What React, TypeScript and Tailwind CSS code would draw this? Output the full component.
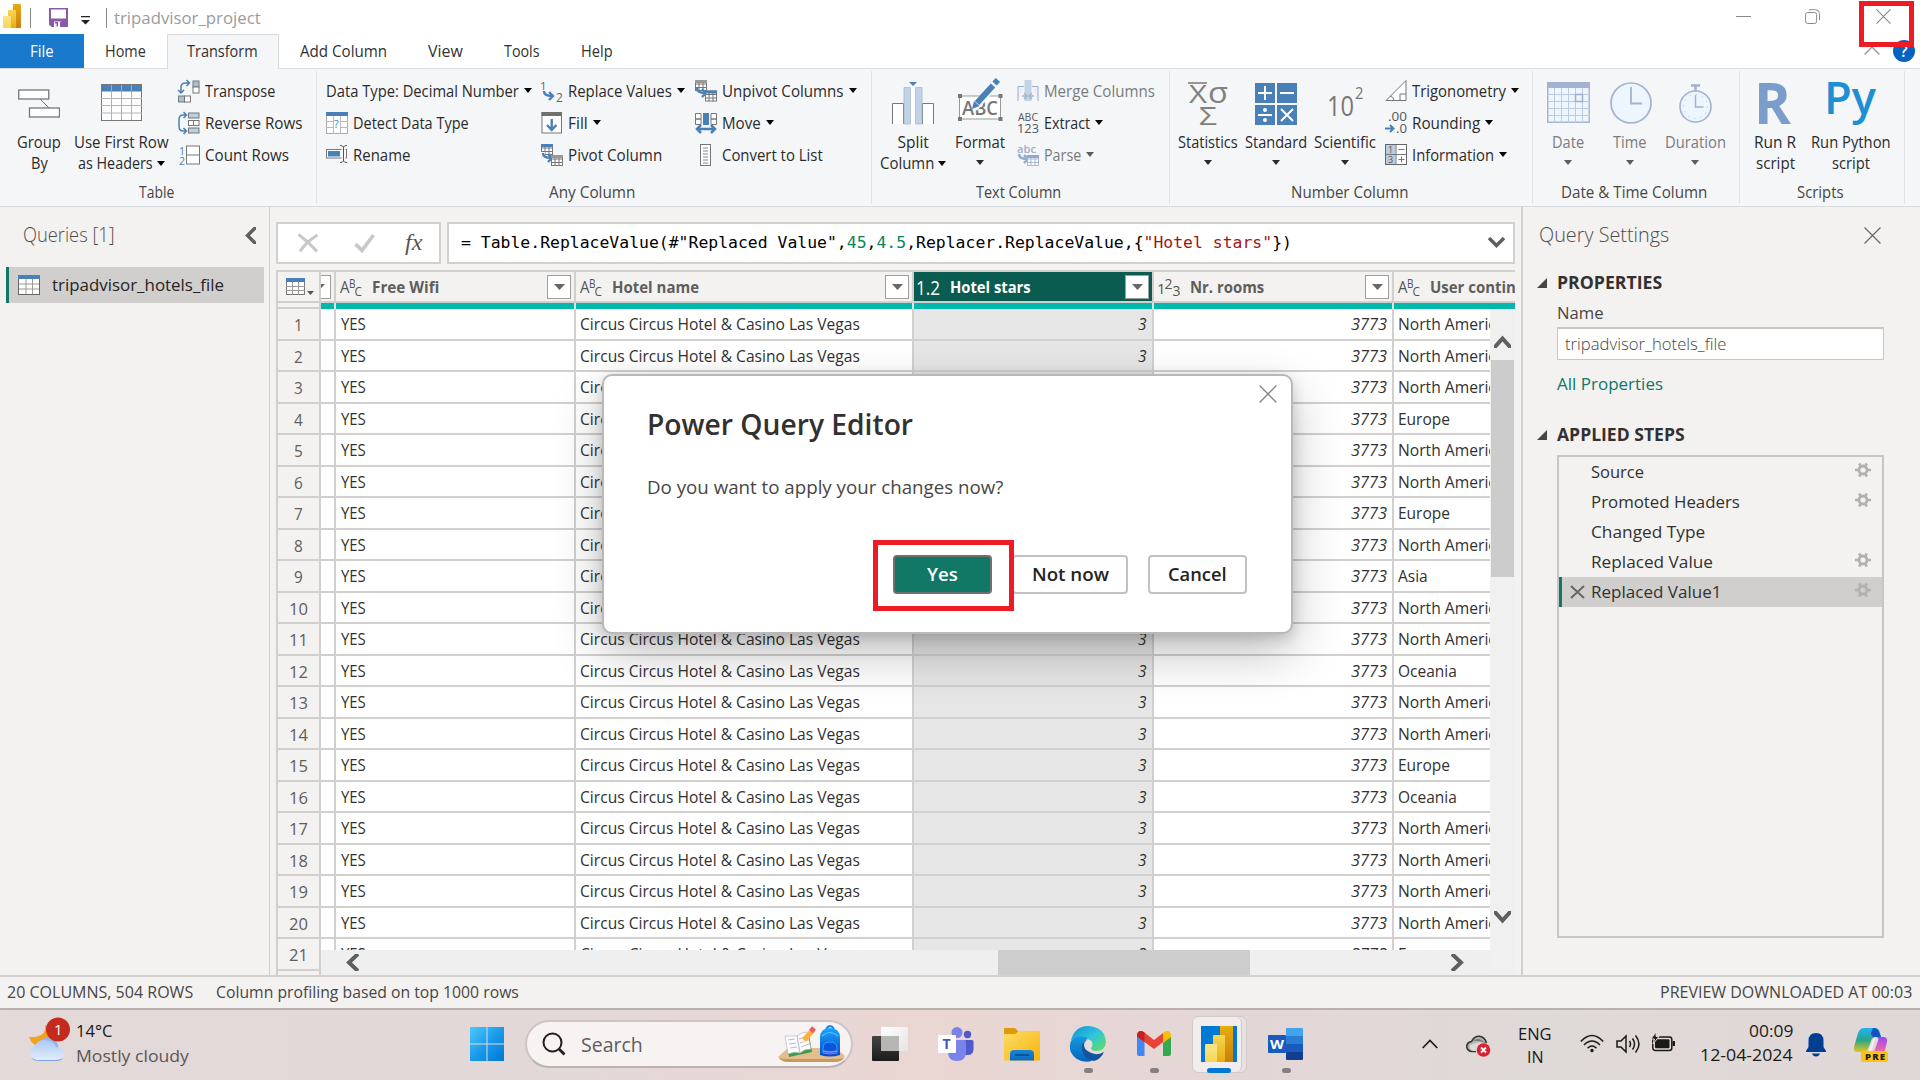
import { useLayoutEffect, useRef, type ReactNode } from "react";

/** Single line of text condensed or stretched to an exact width. */
function T({ w, c = "", children }: { w: number; c?: string; children: ReactNode }) {
  const ref = useRef<HTMLSpanElement>(null);
  useLayoutEffect(() => {
    const el = ref.current;
    if (!el) return;
    const natural = el.offsetWidth;
    if (natural > 0) el.style.transform = `scaleX(${w / natural})`;
  }, [w]);
  return (
    <span className={`block shrink-0 whitespace-pre ${c}`} style={{ width: w }}>
      <span ref={ref} className="inline-block origin-left">
        {children}
      </span>
    </span>
  );
}

function Caret({ c = "text-black" }: { c?: string }) {
  return (
    <svg width="8" height="5" viewBox="0 0 8 5" className={`shrink-0 ${c}`}>
      <path d="M0 0h8L4 5z" fill="currentColor" />
    </svg>
  );
}

type P = { children: ReactNode };
const Ic = ({ children }: P) => (
  <svg width="22" height="22" viewBox="0 0 22 22" fill="none" className="shrink-0 overflow-visible">
    {children}
  </svg>
);

/* ---------- ribbon pieces ---------- */

function Group({ w, label, lw, children }: { w: string; label: string; lw: number; children: ReactNode }) {
  return (
    <div className={`flex shrink-0 ${w}`}>
      <div className="flex min-w-0 flex-1 flex-col items-center">
        <div className="flex h-[112px] w-full pt-[6px]">{children}</div>
        <T w={lw} c="mr-[4px] leading-[22px] text-[#484644]">
          {label}
        </T>
      </div>
      <div className="mt-[2px] h-[133px] w-px bg-[#e1e3e5]" />
    </div>
  );
}

type Line = [string, number, boolean?];
function Big({ c, icon, a, b, off }: { c: string; icon: ReactNode; a: Line; b?: Line; off?: boolean }) {
  const tone = off ? "text-[#7b7b7b]" : "text-[#2b2b2b]";
  return (
    <div className={`flex shrink-0 flex-col items-center ${c} ${tone}`}>
      <div className="flex h-[57px] items-center justify-center">{icon}</div>
      <T w={a[1]} c="leading-[21px]">
        {a[0]}
      </T>
      <div className="flex h-[21px] items-center gap-[4px]">
        {b ? (
          <>
            <T w={b[1]} c="leading-[21px]">
              {b[0]}
            </T>
            {b[2] && <Caret />}
          </>
        ) : (
          <Caret c={off ? "text-[#5c5c5c] -mt-[3px]" : "-mt-[3px]"} />
        )}
      </div>
    </div>
  );
}

function Row({ icon, t, w, caret, off }: { icon?: ReactNode; t: string; w: number; caret?: boolean; off?: boolean }) {
  return (
    <div className={`flex h-8 items-center gap-[5px] ${off ? "text-[#7b7b7b]" : "text-[#2b2b2b]"}`}>
      {icon && <Ic>{icon}</Ic>}
      <T w={w} c="pt-[2px]">
        {t}
      </T>
      {caret && <Caret c={off ? "-mt-[2px] text-[#5c5c5c]" : "-mt-[2px] text-black"} />}
    </div>
  );
}

const BLUE = "#4a80b8";
const GR = "#777";

const tinyTable = (x: number, y: number, head: string, k = GR) => (
  <g>
    <rect x={x + 0.5} y={y + 0.5} width="11" height="10" fill="#fff" stroke={k} />
    <path d={`M${x} ${y + 4}h12M${x} ${y + 7.5}h12M${x + 4} ${y + 1}v10M${x + 8} ${y + 1}v10`} stroke={k} />
    <rect x={x} y={y} width="12" height="3" fill={head} />
  </g>
);
const bend = (x: number, y: number, k = BLUE) => (
  <path d={`M${x} ${y}q0 5 8 5M${x + 5} ${y + 1}l4 4l-4 4`} stroke={k} strokeWidth="2.4" />
);

const iTranspose = (
  <>
    <path d="M3 13V7q0-4 5-4h3M8.500 0l3 3l-3 3M0 10l3 3l3-3" stroke={BLUE} strokeWidth="1.500" />
    <rect x="15" y="1" width="6" height="6" fill="#a8bfda" stroke={GR} />
    <rect x="15" y="7" width="6" height="6" fill="#fff" stroke={GR} />
    <rect x=".5" y="16" width="6" height="6" fill="#a8bfda" stroke={GR} />
    <rect x="6.500" y="16" width="6" height="6" fill="#fff" stroke={GR} />
  </>
);
const iReverse = (
  <>
    <path d="M8 3H5Q1 3 1 8v6q0 5 4 5h3M5.500 0l3 3l-3 3M5.500 16l3 3l-3 3" stroke={BLUE} strokeWidth="1.500" />
    <rect x="10.500" y="1" width="10.500" height="5" fill="#b8cfe0" stroke={GR} />
    <rect x="10.500" y="8.500" width="10.500" height="5" fill="#fff" stroke={GR} />
    <path d="M15.500 8.500v5" stroke={GR} />
    <rect x="10.500" y="16" width="10.500" height="5" fill="#b8cfe0" stroke={GR} />
  </>
);
const iCount = (
  <>
    <rect x="8.500" y="2" width="13" height="18" fill="#fff" stroke={GR} />
    <path d="M8.500 11h13" stroke={GR} />
    <text x="1" y="10.500" fontSize="10.500" fill={BLUE}>1</text>
    <text x="1" y="20.500" fontSize="10.500" fill={BLUE}>2</text>
  </>
);
const iDetect = (
  <>
    <rect x=".5" y=".5" width="21" height="21" fill="#fff" stroke="#aaa" />
    <path d="M0 9.500h22M0 15.500h22M7.500 3v19M14.500 3v19" stroke="#bbb" />
    <rect x="8" y="6" width="6" height="12" fill="#fff" />
    <rect width="22" height="4" fill={BLUE} />
    <text x="8" y="16" fontSize="11" fill={BLUE}>?</text>
  </>
);
const iRename = (
  <>
    <rect x=".5" y="5.500" width="20" height="8.500" fill="#fff" stroke={GR} />
    <rect x="2" y="7" width="12" height="5.500" fill={BLUE} />
    <path d="M17.500 2v16" stroke="#f4f6f8" strokeWidth="4" />
    <path d="M17.500 3v14M14 1.500q3 0 3.500 1.500q.5-1.500 3.500-1.500M14 18.500q3 0 3.500-1.500q.5 1.500 3.500 1.500" stroke="#555" />
  </>
);
const iReplace = (
  <>
    <text x="-1" y="10" fontSize="11.500" fill="#666">1</text>
    <text x="15" y="21.500" fontSize="12" fill="#666">2</text>
    <g>{bend(3, 11)}</g>
  </>
);
const iFill = (
  <>
    <rect x="1" y="1" width="19.500" height="20" fill="#fff" stroke={GR} />
    <rect x=".5" width="20.500" height="4" fill="#6f6f6f" />
    <path d="M10.700 7v11M6 13l4.700 5l4.700-5" stroke={BLUE} strokeWidth="2.400" />
  </>
);
const iPivot = (
  <>
    {tinyTable(0, 0, BLUE)}
    <path d="M1 12v-4M3 12v-4" stroke="#f4f6f8" strokeWidth="2" />
    {bend(2, 9)}
    {tinyTable(10, 11, "#999")}
  </>
);
const iUnpivot = (
  <>
    {tinyTable(0, 0, "#999")}
    {bend(2, 8)}
    {tinyTable(10, 10.5, BLUE)}
  </>
);
const iMove = (
  <>
    <path d="M.5 1.500h5.500v5.500H.5zM.5 7h5.500v5.500H.5zM16 1.500h5.500v5.500H16zM16 7h5.500v5.500H16z" fill="#fff" stroke={GR} />
    <rect x="8" y="1" width="6" height="12" fill={BLUE} />
    <path d="M2 17h18M6 13l-4 4l4 4M16 13l4 4l-4 4" stroke={BLUE} strokeWidth="2.500" />
  </>
);
const iList = (
  <>
    <rect x="5.500" y=".5" width="10" height="21" fill="#fff" stroke={GR} />
    <path d="M8 4h5M8 7h5M8 10h5M8 13h5M8 16h5M8 19h5" stroke="#888" />
  </>
);
const iMerge = (
  <>
    <path d="M1 21V6.500h6M21 21V6.500h-6" stroke="#9db0cc" fill="#e9f0f9" />
    <path d="M7.500 0h7v21h-7z" fill="#c3d2e6" />
    <path d="M5 16h4M13 16h4M7 13l3 3l-3 3M15 13l-3 3l3 3" stroke="#a9b5c9" strokeWidth="1.500" />
  </>
);
const iExtract = (
  <>
    <text x="1" y="9" fontSize="10" textLength="20" lengthAdjust="spacingAndGlyphs" fill="#555">ABC</text>
    <text x="0" y="20.500" fontSize="12" textLength="22" lengthAdjust="spacingAndGlyphs" fill="#555">123</text>
  </>
);
const iParse = (
  <>
    <text x="0" y="9" fontSize="10.500" fontWeight="600" textLength="19" lengthAdjust="spacingAndGlyphs" fill="#a3afc8">abc</text>
    {bend(2, 10, "#93aacb")}
    {tinyTable(10, 11, "#93a9cc", "#a9b7d0")}
  </>
);
const iTrig = (
  <>
    <path d="M1 20.500h20V.500z" fill="#fff" stroke={GR} />
    <path d="M15 20v-6h6M5 16q4 1 4 4" stroke={GR} />
  </>
);
const iRound = (
  <>
    <text x="3" y="9" fontSize="12" textLength="19" lengthAdjust="spacingAndGlyphs" fill="#555">.00</text>
    <text x="11" y="21" fontSize="12" textLength="11" lengthAdjust="spacingAndGlyphs" fill="#555">.0</text>
    <path d="M0 16.500h8M5 13l3.500 3.500L5 20" stroke={BLUE} strokeWidth="2" />
  </>
);
const iInfo = (
  <>
    <rect x=".5" y=".5" width="21" height="20" fill="#fff" stroke="#666" />
    <rect x="1" y="1" width="9.500" height="19" fill="#b9cce2" />
    <path d="M11 1v20M1 10.500h20M13.500 5.500h6M13.500 15.500h6M16.500 12.500v6" stroke={GR} />
    <text x="3" y="9.300" fontSize="9" fill="#555">1</text>
    <text x="3" y="19" fontSize="9" fill="#555">3</text>
  </>
);

const bGroup = (
  <svg width="42" height="30" viewBox="0 0 42 30" fill="none">
    <path d="M22 10l9 9" stroke={GR} />
    <rect x=".75" y="1" width="30" height="9" fill="#fff" stroke={GR} strokeWidth="1.300" />
    <rect x="11.500" y="19" width="30" height="9" fill="#fff" stroke={GR} strokeWidth="1.300" />
  </svg>
);
const bHeaders = (
  <svg width="41" height="37" viewBox="0 0 41 37" fill="none" className="-mt-[2px]">
    <rect x=".5" y=".5" width="40" height="36" fill="#fff" stroke="#777" />
    <path d="M0 14.500h41M0 21.500h41M0 29h41M10.500 7v29M20.500 7v29M30.500 7v29" stroke="#b3b3b3" />
    <rect x="1" y="1" width="39" height="6.500" fill={BLUE} />
    <path d="M10.500 1v6M20.500 1v6M30.500 1v6" stroke="#8fb0d3" />
  </svg>
);
const bSplit = (
  <svg width="42" height="43" viewBox="0 0 42 43" fill="none">
    <path d="M.5 42V21.500h11V42M41.500 42V21.500h-11V42" fill="#fff" stroke={GR} />
    <path d="M12 5h18v37H12z" fill="#fff" />
    <path d="M12 42V5.500h6.500V42zM23.500 42V5.500H30V42z" fill="#c0d3e8" stroke="#a9b9cc" strokeWidth=".8" />
    <path d="M17 0h8l-4 4z" fill={BLUE} />
  </svg>
);
const bFormat = (
  <svg width="44" height="46" viewBox="0 0 44 46" fill="none" className="mb-[9px] overflow-visible">
    <rect x="1.500" y="20" width="41" height="23" fill="#fff" stroke="#999" />
    <text x="4" y="38.500" fontSize="19" fontWeight="600" textLength="36" lengthAdjust="spacingAndGlyphs" fill="#777">ABC</text>
    <path d="M0 18h4v4H0zM40.500 18h4v4h-4zM0 41h4v4H0zM40.500 41h4v4h-4z" fill="#777" />
    <path d="M16 32L40 5" stroke="#f4f6f8" strokeWidth="8" />
    <path d="M19 27L35 9.500M36.500 7.500L40 4" stroke={BLUE} strokeWidth="6" />
    <path d="M14 33l2-8l5.500 5z" fill={BLUE} />
  </svg>
);
const bStats = (
  <svg width="40" height="44" viewBox="0 0 40 44" fill="#808080" className="overflow-visible">
    <text x="1" y="21" fontSize="26" textLength="18" lengthAdjust="spacingAndGlyphs">X</text>
    <text x="20" y="21" fontSize="30" textLength="20" lengthAdjust="spacingAndGlyphs">σ</text>
    <text x="11" y="43" fontSize="26" textLength="18" lengthAdjust="spacingAndGlyphs">Σ</text>
    <path d="M0 1h19" stroke="#808080" strokeWidth="1.600" />
  </svg>
);
const bStandard = (
  <svg width="42" height="42" viewBox="0 0 42 42" fill="none">
    <path d="M0 0h20v20H0zM22 0h20v20H22zM0 22h20v20H0zM22 22h20v20H22z" fill={BLUE} />
    <path d="M3 10h14M10 3v14M25 10h14M3 32h14M26 26l12 12M38 26L26 38" stroke="#fff" strokeWidth="2" />
    <circle cx="10" cy="27" r="2" fill="#fff" />
    <circle cx="10" cy="37" r="2" fill="#fff" />
  </svg>
);
const bSci = (
  <svg width="37" height="34" viewBox="0 0 37 34" fill="#777" className="-mt-[4px] overflow-visible">
    <text x="0" y="31" fontSize="27" fontWeight="500" textLength="27" lengthAdjust="spacingAndGlyphs">10</text>
    <text x="28" y="14" fontSize="17" textLength="8.500" lengthAdjust="spacingAndGlyphs">2</text>
  </svg>
);
const DT = "#a3b2ce";
const bDate = (
  <svg width="43" height="41" viewBox="0 0 43 41" fill="none" className="-mt-[2px]">
    <rect x=".75" y=".75" width="41.500" height="39.500" fill="#edf5ff" stroke={DT} strokeWidth="1.400" />
    <rect width="43" height="6" fill={DT} />
    <path d="M0 12.500h43M0 19.500h43M0 26.500h43M0 33.500h43M7.500 6v35M14.500 6v35M21.500 6v35M28.500 6v35M35.500 6v35" stroke="#bccade" />
    <rect x="28.500" y="12.500" width="7" height="7" stroke={DT} strokeWidth="1.600" />
  </svg>
);
const bTime = (
  <svg width="42" height="42" viewBox="0 0 42 42" fill="none" className="-mt-px ml-[2px]">
    <circle cx="21" cy="21" r="20" fill="#edf5ff" stroke={DT} strokeWidth="1.700" />
    <path d="M21 5v16.500h11" stroke={DT} strokeWidth="1.800" />
  </svg>
);
const bDur = (
  <svg width="33" height="39" viewBox="0 0 33 39" fill="none">
    <path d="M12 1.500h9M16.500 1v6" stroke={DT} strokeWidth="2.500" />
    <circle cx="16.500" cy="22.500" r="15.500" fill="#edf5ff" stroke={DT} strokeWidth="1.600" />
    <circle cx="16.500" cy="22.500" r="12" stroke={DT} strokeDasharray="1 5.280" />
    <path d="M16.500 11v12h8" stroke={DT} strokeWidth="1.500" />
  </svg>
);
const bR = (
  <svg width="32" height="43" viewBox="0 0 32 43" className="mr-[5px] overflow-visible">
    <text x="-3" y="42" fontSize="58" fontWeight="700" textLength="37" lengthAdjust="spacingAndGlyphs" fill="#7b9dcb">R</text>
  </svg>
);
const bPy = (
  <svg width="49" height="46" viewBox="0 0 49 46" className="mr-[2px] overflow-visible">
    <text x="-2" y="33" fontSize="45" fontWeight="600" textLength="52" lengthAdjust="spacingAndGlyphs" fill="#1e8fd2">Py</text>
  </svg>
);

/* ---------- table ---------- */

const continents = "N N N E N N E N A N N O N N E O N N N N E".split(" ");
const names: Record<string, [string, number]> = {
  N: ["North America", 107],
  E: ["Europe", 52],
  A: ["Asia", 30],
  O: ["Oceania", 59],
};

function Filter() {
  return (
    <div className="mr-[3px] flex h-6 w-6 shrink-0 items-center justify-center border border-[#a19f9d] bg-white">
      <svg width="11" height="6" viewBox="0 0 11 6">
        <path d="M0 0h11L5.500 6z" fill="#666" />
      </svg>
    </div>
  );
}

const abcIcon = (
  <svg width="24" height="20" viewBox="0 0 24 20" fill="#555" className="shrink-0 overflow-visible">
    <text x="0" y="15" fontSize="15.500" textLength="9.500" lengthAdjust="spacingAndGlyphs">A</text>
    <text x="9" y="10" fontSize="12.500" textLength="6.500" lengthAdjust="spacingAndGlyphs">B</text>
    <text x="14.500" y="18" fontSize="13.500" textLength="7.500" lengthAdjust="spacingAndGlyphs">C</text>
  </svg>
);
const n123Icon = (
  <svg width="24" height="20" viewBox="0 0 24 20" fill="#555" className="shrink-0 overflow-visible">
    <text x="-1" y="16" fontSize="15">1</text>
    <text x="6.500" y="11" fontSize="14">2</text>
    <text x="14.500" y="18" fontSize="14">3</text>
  </svg>
);
const decIcon = (
  <T w={24} c="-ml-[2px] mr-[2px] text-[20px] leading-[26px] text-white">
    1.2
  </T>
);

const cols: { w: string; icon?: ReactNode; t?: string; tw?: number; on?: boolean; last?: boolean }[] = [
  { w: "w-[15px]" },
  { w: "w-[240px]", icon: abcIcon, t: "Free Wifi", tw: 67 },
  { w: "w-[338px]", icon: abcIcon, t: "Hotel name", tw: 87 },
  { w: "w-[240px]", icon: decIcon, t: "Hotel stars", tw: 81, on: true },
  { w: "w-[240px]", icon: n123Icon, t: "Nr. rooms", tw: 74 },
  { w: "w-[121px]", icon: abcIcon, t: "User continent", tw: 111, last: true },
];

const Chevron = ({ d, w, h, sw = 4, k = "#5f5f5f" }: { d: string; w: number; h: number; sw?: number; k?: string }) => (
  <svg width={w} height={h} viewBox={`0 0 ${w} ${h}`} fill="none" className="shrink-0 overflow-hidden">
    <path d={d} stroke={k} strokeWidth={sw} />
  </svg>
);

const CrossThin = ({ s, k = "#666" }: { s: number; k?: string }) => (
  <svg width={s} height={s} viewBox="0 0 16 16" fill="none" className="shrink-0">
    <path d="M.5.5l15 15M15.500.5l-15 15" stroke={k} strokeWidth="1.100" />
  </svg>
);

function DataGrid() {
  return (
    <div className="mt-[6px] flex h-[705px] w-[1239px] border-t-2 border-[#d2d0ce]">
      {/* row numbers */}
      <div className="w-[45px] shrink-0 overflow-hidden border-x-2 border-[#d2d0ce] text-[17px] text-[#605e5c]">
        <div className="flex h-[31px] items-center gap-[2px] border-b-2 border-[#d2d0ce] pl-2">
          <svg width="19" height="17" viewBox="0 0 19 17" fill="none" className="shrink-0">
            <rect x=".5" y=".5" width="18" height="16" fill="#fff" stroke="#777" />
            <path d="M0 8.500h19M0 12.500h19M6.500 4v13M12.500 4v13" stroke="#999" />
            <rect width="19" height="4" fill={BLUE} />
          </svg>
          <svg width="7" height="4" viewBox="0 0 7 4" className="mt-3 shrink-0">
            <path d="M0 0h7L3.500 4z" fill="#555" />
          </svg>
        </div>
        <div className="h-[6px] border-b-2 border-[#d2d0ce]" />
        {continents.map((_, i) => (
          <div key={i} className="flex h-[31.500px] items-center justify-center border-b-2 border-[#d2d0ce] pt-[2px] pr-px">
            <T w={i < 9 ? 9 : 18.5}>{i + 1}</T>
          </div>
        ))}
      </div>
      <div className="flex min-w-0 flex-1 flex-col">
        <div className="flex h-[31px] overflow-hidden border-b-2 border-[#d2d0ce] text-[15.500px] font-bold">
          {cols.map((c, i) => (
            <div
              key={i}
              className={`flex shrink-0 items-center overflow-hidden ${c.w} ${c.last ? "" : "border-r-2 border-[#d2d0ce]"} ${c.on ? "bg-[#0b5c50] text-white" : "text-[#605e5c]"} ${c.t ? "justify-between" : "justify-end"}`}
            >
              {c.t && (
                <div className="flex items-center gap-[8px] pt-[2px] pl-1 font-normal">
                  {c.icon}
                  <T w={c.tw ?? 0} c="font-bold">
                    {c.t}
                  </T>
                </div>
              )}
              {!c.last && <Filter />}
            </div>
          ))}
        </div>
        <div className="flex h-[6px] shrink-0">
          {cols.map((c, i) => (
            <div key={i} className={`shrink-0 bg-[#01b8aa] ${c.w} ${c.last ? "" : "border-r-2 border-[#e4e3e2]"}`} />
          ))}
        </div>
        <div className="flex min-h-0 flex-1">
          <div className="flex w-[1169px] shrink-0 flex-col">
            <div className="h-[641px] shrink-0 overflow-hidden bg-white text-[15.500px] text-[#323130]">
              {continents.map((k, i) => (
                <div key={i} className="flex h-[31.500px] *:flex *:shrink-0 *:items-center *:border-b-2 *:border-[#d2d0ce] *:pt-[2px]">
                  <div className="w-[15px] border-r-2" />
                  <div className="w-[240px] border-r-2 pl-[5px]">
                    <T w={25}>YES</T>
                  </div>
                  <div className="w-[338px] border-r-2 pl-[4px]">
                    <T w={280}>Circus Circus Hotel &amp; Casino Las Vegas</T>
                  </div>
                  <div className="w-[240px] justify-end border-r-2 bg-[#e6e6e6] pr-[5px] italic">
                    <T w={9}>3</T>
                  </div>
                  <div className="w-[240px] justify-end border-r-2 pr-[5px] italic">
                    <T w={36}>3773</T>
                  </div>
                  <div className="w-[96px] overflow-hidden pl-[4px]">
                    <T w={names[k][1]}>{names[k][0]}</T>
                  </div>
                </div>
              ))}
            </div>
            <div className="flex h-[25px] items-center bg-[#efefef] pl-[25px]">
              <Chevron d="M12 0L3 8.500L12 17" w={13} h={17} />
              <div className="ml-[639px] h-full w-[252px] bg-[#cdcdcd]" />
              <div className="ml-[201px]">
                <Chevron d="M1 0L10 8.500L1 17" w={13} h={17} />
              </div>
            </div>
          </div>
          <div className="flex flex-1 flex-col items-center bg-[#f0f0f0] pt-[26px]">
            <Chevron d="M0 13L8.500 3.500L17 13" w={17} h={13} />
            <div className="mt-[12px] h-[217px] w-[23px] bg-[#cccccc]" />
            <div className="mt-[334px]">
              <Chevron d="M0 0L8.500 9.500L17 0" w={17} h={13} />
            </div>
          </div>
        </div>
      </div>
    </div>
  );
}

const steps: [string, number, boolean][] = [
  ["Source", 53, true],
  ["Promoted Headers", 149, true],
  ["Changed Type", 114, false],
  ["Replaced Value", 122, true],
  ["Replaced Value1", 130, true],
];

const Gear = () => (
  <svg width="16" height="16" viewBox="0 0 16 16" fill="none" stroke="#b3b0ad">
    <circle cx="8" cy="8" r="4" strokeWidth="2.800" />
    <path d="M0 8h3M13 8h3M4.200 1.500l1.500 2.700M11.800 1.500l-1.500 2.700M4.200 14.500l1.500-2.700M11.800 14.500l-1.500-2.700" strokeWidth="2.600" />
  </svg>
);

const Section = ({ t, w }: { t: string; w: number }) => (
  <div className="flex h-[24px] items-center gap-[10px] text-[17px] font-bold text-[#323130]">
    <svg width="10" height="10" viewBox="0 0 10 10">
      <path d="M10 0v10H0z" fill="#484644" />
    </svg>
    <T w={w}>{t}</T>
  </div>
);

function Settings() {
  return (
    <div className="flex w-[399px] shrink-0 flex-col border-l-2 border-[#d2d0ce] pl-[14px]">
      <div className="mt-[14px] flex h-7 items-center justify-between pr-[39px] pl-[2px] text-[19.500px] font-light text-[#4f4d4b]">
        <T w={130}>Query Settings</T>
        <CrossThin s={17} />
      </div>
      <div className="mt-[22px]">
        <Section t="PROPERTIES" w={105} />
      </div>
      <div className="flex flex-col pl-[20px] text-[17px] text-[#484644]">
        <T w={47} c="mt-[6px] leading-[24px]">
          Name
        </T>
        <div className="mt-[2px] flex h-[33px] w-[327px] items-center border border-t-2 border-[#c8c6c4] bg-white pl-[7px] font-light">
          <T w={161}>tripadvisor_hotels_file</T>
        </div>
        <T w={106} c="mt-[12px] leading-[24px] text-[#117865]">
          All Properties
        </T>
      </div>
      <div className="mt-[27px]">
        <Section t="APPLIED STEPS" w={128} />
      </div>
      <div className="mt-[8px] ml-[20px] flex h-[483px] w-[327px] flex-col border-2 border-[#c8c6c4] text-[16.500px] text-[#323130]">
        {steps.map(([t, w, gear], i) => (
          <div
            key={t}
            className={`flex h-[30px] shrink-0 items-center border-l-[3px] ${i === 4 ? "border-[#117865] bg-[#d1cfcd]" : "border-transparent"}`}
          >
            <div className="flex w-[29px] justify-center pl-[2px]">
              {i === 4 && (
                <svg width="15" height="14" viewBox="0 0 15 14" fill="none">
                  <path d="M1 1l13 12M14 1L1 13" stroke="#666" strokeWidth="2" />
                </svg>
              )}
            </div>
            <T w={w}>{t}</T>
            <div className="ml-auto pr-[11px] pb-[4px]">{gear && <Gear />}</div>
          </div>
        ))}
      </div>
    </div>
  );
}

function Dialog() {
  return (
    <div className="absolute top-[374px] left-[602px] h-[260px] w-[691px] rounded-[10px] border-2 border-[#b9b9b9] bg-white shadow-[0_20px_50px_rgba(0,0,0,0.24),0_4px_14px_rgba(0,0,0,0.16)]">
      <div className="flex h-[27px] items-end justify-end pr-[14px]">
        <CrossThin s={18} k="#858585" />
      </div>
      <div className="flex flex-col pl-[43px]">
        <T w={266} c="mt-[3px] text-[28px] leading-[36px] font-semibold text-[#323130]">
          Power Query Editor
        </T>
        <T w={356} c="mt-[32px] text-[18.500px] leading-[26px] text-[#484644]">
          Do you want to apply your changes now?
        </T>
        <div className="mt-[55px] flex gap-[20px] pl-[246px] text-[18px] font-semibold text-[#252423]">
          <div className="flex h-[39px] w-[99px] items-center justify-center rounded-[4px] border-2 border-[#70706f] bg-[#117865] text-white">
            <T w={31}>Yes</T>
          </div>
          <div className="flex h-[39px] w-[116px] items-center justify-center rounded-[4px] border-2 border-[#c2c2c2] bg-white">
            <T w={77}>Not now</T>
          </div>
          <div className="flex h-[39px] w-[99px] items-center justify-center rounded-[4px] border-2 border-[#c2c2c2] bg-white">
            <T w={59}>Cancel</T>
          </div>
        </div>
      </div>
      <div className="absolute top-[164px] left-[269px] h-[71px] w-[141px] border-[5px] border-[#ed1c24]" />
    </div>
  );
}

/* ---------- taskbar ---------- */

const App36 = ({ ml, dot, children }: { ml: string; dot?: boolean; children: ReactNode }) => (
  <div className={`flex h-full shrink-0 flex-col items-center pt-[16px] ${ml}`}>
    <svg width="36" height="36" viewBox="0 0 36 36" fill="none" className="overflow-visible">
      {children}
    </svg>
    {dot && <div className="mt-[6px] h-[5px] w-[9px] rounded-full bg-[#85807e]" />}
  </div>
);

const Grad = ({ id, a, b, c, v }: { id: string; a: string; b: string; c?: string; v?: boolean }) => (
  <linearGradient id={id} x1="0" y1="0" x2={v ? "0" : "1"} y2="1">
    <stop stopColor={a} />
    {c && <stop offset=".5" stopColor={c} />}
    <stop offset="1" stopColor={b} />
  </linearGradient>
);

const pbiBars = (
  <>
    <defs>
      <Grad id="pb1" a="#e6ad10" b="#c87e0e" v />
      <Grad id="pb2" a="#f6d751" b="#e6ad10" v />
      <Grad id="pb3" a="#f9e589" b="#f6d751" v />
    </defs>
    <rect x="10" width="8" height="24" rx=".8" fill="url(#pb1)" />
    <rect x="5" y="6" width="8" height="18" rx=".8" fill="url(#pb2)" />
    <rect y="12" width="8" height="12" rx=".8" fill="url(#pb3)" />
  </>
);

function Taskbar() {
  return (
    <div className="flex h-[70px] items-start bg-[linear-gradient(90deg,#e3d9d8_0%,#e3d8d8_30%,#ead6d3_48%,#e4d7d6_62%,#dfd9d8_80%,#dfd8d7_100%)] text-[#1b1a19]">
      <svg width="42" height="46" viewBox="0 0 42 46" fill="none" className="mt-[7px] ml-[28px] shrink-0">
        <defs>
          <Grad id="cl" a="#a9c8f7" b="#e5edfb" c="#c8dcf8" v />
        </defs>
        <path d="M17 8q2 13-16 12q3 10 14 9q10-2 10-12q-1-7-8-9z" fill="#f2a21f" />
        <circle cx="20" cy="31" r="10.500" fill="#90b5f2" />
        <path d="M8 44a8 8 0 0 1-1-15q3-7 10-6q8 0 11 7q8 1 8 7q0 6-7 7z" fill="url(#cl)" />
        <path d="M3 41q3 3 8 3h18q4 0 6-3q-3 2-8 2H9z" fill="#7fa2e6" />
        <circle cx="30" cy="12.500" r="12" fill="#c42b1c" />
        <text x="26" y="18" fontSize="15" fill="#fff">1</text>
      </svg>
      <div className="mt-[8px] ml-[6px] flex w-[120px] shrink-0 flex-col text-[17px] leading-[25px]">
        <T w={36}>14°C</T>
        <T w={113} c="text-[#5b5655]">
          Mostly cloudy
        </T>
      </div>
      <App36 ml="ml-[273px]">
        <defs>
          <Grad id="wn" a="#4cc9fd" b="#0078d4" c="#1a9bea" />
        </defs>
        <path d="M1 1h16.500v16.500H1zM18.500 1H35v16.500H18.500zM1 18.500h16.500V35H1zM18.500 18.500H35V35H18.500z" fill="url(#wn)" />
      </App36>
      <div className="mt-[10px] ml-[20px] flex h-[48px] w-[328px] shrink-0 items-center rounded-full border-2 border-[#cfc3c3] border-b-[#bdb1b0] bg-[#f7f3f2] pl-[15px]">
        <svg width="24" height="24" viewBox="0 0 24 24" fill="none" className="shrink-0">
          <circle cx="10.500" cy="10.500" r="9" stroke="#1f1f1f" strokeWidth="2" />
          <path d="M17 17l5.500 5.500" stroke="#1f1f1f" strokeWidth="2.800" />
        </svg>
        <T w={62} c="ml-[15px] pt-[2px] text-[19.500px] text-[#5f5b5a]">
          Search
        </T>
        <svg width="68" height="40" viewBox="0 0 68 40" fill="none" className="ml-[135px] shrink-0">
          <defs>
            <Grad id="bp" a="#1ba5ff" b="#0849c8" v />
          </defs>
          <path d="M0 33l10-9h48l9 8q-3 6-10 6H10q-6 0-10-5z" fill="#e3bd8c" />
          <path d="M1 34q3 4 9 4h47q6 0 9-4q-4 1-9 1H10q-5 0-9-1z" fill="#c99860" />
          <path d="M8 15l23-4l3 17l-23 5z" fill="#3d9b4c" />
          <path d="M7 12l12 0l3 17q-6-2-12 1zM19 12q5-4 10-4l4 17q-7 0-11 4z" fill="#fdfdff" stroke="#b9b5c8" strokeWidth=".7" />
          <path d="M10 16l7-1M11 20l7-1M12 24l7-1M21 15l8-3M22 19l8-3M23 23l8-3" stroke="#a9a4bd" strokeWidth=".8" />
          <path d="M26 16l9-10" stroke="#f8b13a" strokeWidth="5" />
          <path d="M33 7.500l3-3.500" stroke="#ef5a5a" strokeWidth="5" />
          <path d="M24 19l1-4l3 3z" fill="#ffe0a8" />
          <path d="M48 5q4-6 8 0" stroke="#1684ee" strokeWidth="2" />
          <path d="M42 31V14q0-10 10-10q10 0 10 10v17q-10 3-20 0z" fill="url(#bp)" />
          <path d="M45 29v-5q0-6 7-6t7 6v5q-7 2-14 0z" fill="#0a55d8" stroke="#2aa6ff" />
          <path d="M44 12q8-7 16 0" stroke="#57c7ff" strokeWidth="1.200" />
          <path d="M45 27q7 2 14 0" stroke="#a77bff" strokeWidth="1.500" />
        </svg>
      </div>
      <App36 ml="ml-[19px]">
        <defs>
          <Grad id="tv" a="#454442" b="#1b1b1b" v />
          <Grad id="tw" a="#ffffff" b="#e6e3e2" />
        </defs>
        <rect x="0" y="10" width="27" height="25" rx="1" fill="url(#tv)" />
        <rect x="9" y="1" width="27" height="24" rx="1" fill="url(#tw)" />
        <path d="M9 10h18v15H9z" fill="#b8b6b5" />
      </App36>
      <App36 ml="ml-[30px]">
        <circle cx="19" cy="6.500" r="5.500" fill="#7b83eb" />
        <circle cx="29.500" cy="8.500" r="3.700" fill="#5059c9" />
        <path d="M27 14h7q1.500 0 1.500 1.500V23q0 6-6 6H27z" fill="#5059c9" />
        <path d="M10 14h16.500q1.500 0 1.500 1.500V26q0 9-9 9t-9-9z" fill="#7b83eb" />
        <rect x="0" y="9" width="18" height="18" rx="1" fill="#fff" />
        <text x="4.500" y="23" fontSize="14" fontWeight="700" fill="#4b53bc">T</text>
      </App36>
      <App36 ml="ml-[30px]">
        <defs>
          <Grad id="fo" a="#ffdb66" b="#f7b50b" />
          <Grad id="fb" a="#1a85d8" b="#0a6bbd" v />
        </defs>
        <path d="M0 3q0-1 1-1h10l4 4v5H0z" fill="#dd9b09" />
        <path d="M0 8h11l4-3h20q1 0 1 1v28.500H0z" fill="url(#fo)" />
        <path d="M6 34.500V28q0-4 4-4h16q4 0 4 4v6.500z" fill="url(#fb)" />
        <path d="M11 29h14" stroke="#0b4c8c" strokeWidth="1.600" />
      </App36>
      <App36 ml="ml-[30px]" dot>
        <defs>
          <Grad id="e1" a="#0b90d8" b="#63e05a" c="#30c4dd" />
          <Grad id="e2" a="#1499e0" b="#0664b8" v />
        </defs>
        <path d="M1 14Q5 0 18 0q17 1 18 16q-1 9-10 9q-5 0-5-3q2-2 1-5q-2-4-7-4Q8 12 1 14z" fill="url(#e1)" />
        <path d="M18 12Q6 8 1 15q-4 11 6 18q6 4 15 2q-9-5-9-13q0-8 5-10z" fill="url(#e2)" />
        <path d="M17 13q-6 4-5 11q2 10 12 11q7-2 10-9q-9 5-16-1q-5-5-1-12z" fill="#10539f" />
        <path d="M14 19q0-4 4-5.500q4 .5 4.500 4q0 2-1.500 4q-1 4 8 4.500q4-.5 5-1q-8 4-14 1q-6-2-6-7z" fill="#e8dbd9" />
      </App36>
      <App36 ml="ml-[30px]" dot>
        <path d="M1 10l7.500 6v14H3q-2 0-2-2z" fill="#4285f4" />
        <path d="M35 10l-8 6v14h6q2 0 2-2z" fill="#34a853" />
        <path d="M1 10q0-5 4-5q2 0 4 2l9 7l9-7v9l-9 7L8.500 16z" fill="#ea4335" />
        <path d="M1 10q0-5 4-5q1.500 0 3.500 1.500V16L1 10.500z" fill="#c5221f" />
        <path d="M27 7q2-2 4-2q4 0 4 5v1l-8 6z" fill="#fbbc04" />
      </App36>
      <div className="mt-[6px] ml-[20px] flex h-[57px] w-[55px] shrink-0 rounded-[6px] border border-[#d3caca] bg-[#e9e1e0]">
        <div className="flex h-full w-[49px] flex-col items-center rounded-[6px] border-r border-[#d3caca] bg-[#f2ecec] pt-[9px] pl-[4px]">
          <svg width="36" height="36" viewBox="0 0 36 36" className="shrink-0">
            <rect width="36" height="36" fill="#0078d4" />
            <rect x="19" width="13" height="36" fill="url(#pb1)" />
            <rect x="12" y="9" width="12" height="27" rx="1" fill="url(#pb2)" />
            <rect x="4" y="18" width="12" height="18" rx="1" fill="url(#pb3)" />
          </svg>
          <div className="mt-[6px] h-[5px] w-[24px] shrink-0 rounded-full bg-[#0078d4]" />
        </div>
      </div>
      <App36 ml="ml-[21px]" dot>
        <path d="M18 10V3q0-1 1-1h15q1 0 1 1v7z" fill="#41a5ee" />
        <path d="M18 10h17v8H18z" fill="#2b7cd3" />
        <path d="M18 18h17v8H18z" fill="#185abd" />
        <path d="M18 26h17v7q0 1-1 1H19q-1 0-1-1z" fill="#103f91" />
        <rect y="9" width="18" height="18" rx="1" fill="#185abd" />
        <text x="2" y="23" fontSize="13" fontWeight="700" textLength="14" lengthAdjust="spacingAndGlyphs" fill="#fff">W</text>
      </App36>

      <svg width="16" height="10" viewBox="0 0 16 10" fill="none" className="mt-[29px] ml-[118px] shrink-0">
        <path d="M.7 9L8 1.500L15.300 9" stroke="#1b1a19" strokeWidth="1.700" />
      </svg>
      <svg width="26" height="22" viewBox="0 0 26 22" fill="none" className="mt-[25px] ml-[28px] shrink-0">
        <path d="M10 16.500H6a5 5 0 0 1-.5-10Q8 1 13.500 1.200Q19 2 20.500 8" stroke="#333" strokeWidth="1.600" fill="#b5b3b2" />
        <path d="M4 10q8-4 14-2l-2 8H7q-4-1-3-6z" fill="#dddbda" />
        <path d="M7 6q6-5 12 2q-6-3-12-2z" fill="#777" />
        <circle cx="17.500" cy="15" r="6.800" fill="#dc2232" />
        <path d="M15 12.500l5 5M20 12.500l-5 5" stroke="#fff" strokeWidth="1.800" />
      </svg>
      <div className="mt-[12px] ml-[26px] flex w-[34px] shrink-0 flex-col items-center text-[17px] leading-[23px]">
        <T w={34}>ENG</T>
        <T w={17}>IN</T>
      </div>
      <svg width="24" height="19" viewBox="0 0 24 19" fill="none" stroke="#1b1a19" strokeWidth="1.500" className="mt-[24px] ml-[28px] shrink-0">
        <path d="M.8 7.500Q12-4.500 23.200 7.500M4 11q8-8 16 0M7.500 14.200q4.500-4.400 9 0" />
        <circle cx="12" cy="16.500" r="1.700" fill="#1b1a19" stroke="none" />
      </svg>
      <svg width="25" height="20" viewBox="0 0 25 20" fill="none" stroke="#1b1a19" strokeWidth="1.500" className="mt-[24px] ml-[12px] shrink-0">
        <path d="M1 7h4l5-5v16l-5-5H1zM13.500 7q2 3 0 6M16.500 4.500q4 5.500 0 11M19.500 1.500q7 8.500 0 17" />
      </svg>
      <svg width="25" height="20" viewBox="0 0 25 20" fill="none" className="mt-[22px] ml-[10px] shrink-0">
        <rect x="1.800" y="5" width="19" height="13.500" rx="2.500" stroke="#1b1a19" strokeWidth="1.500" />
        <rect x="4" y="7.300" width="14.500" height="9" rx="1" fill="#1b1a19" />
        <path d="M21.500 9h2.500v5h-2.500z" fill="#1b1a19" />
        <path d="M5 0L0 7h3.500L2 12l6-7.500H5z" fill="#1b1a19" stroke="#e0d9d8" strokeWidth="1" />
      </svg>
      <div className="mt-[9px] ml-[24px] flex w-[93px] shrink-0 flex-col items-end text-[17px] leading-[24px]">
        <T w={44}>00:09</T>
        <T w={93}>12-04-2024</T>
      </div>
      <svg width="20" height="24" viewBox="0 0 20 24" fill="#003e92" className="mt-[23px] ml-[13px] shrink-0">
        <path d="M10 0q7.500 0 7.500 8v6l2.500 4v1H0v-1l2.500-4V8Q2.500 0 10 0zM6 20.500h8q-1 3-4 3t-4-3z" />
      </svg>
      <svg width="36" height="36" viewBox="0 0 36 36" fill="none" className="mt-[17px] ml-[27px] shrink-0">
        <defs>
          <Grad id="c1" a="#23b1f4" b="#e7c51a" c="#28a58c" v />
          <Grad id="c2" a="#8a4ff0" b="#f5788e" c="#d457c4" v />
        </defs>
        <path d="M11 1h11q4 0 5 5l1 4h-5q-4 0-5 4l-3 8q-1 3-5 3H4q-4 0-3-5l4-14q2-5 6-5z" fill="url(#c1)" />
        <path d="M20 1q5 0 6 4l2 5h-6q-4 0-4-4z" fill="#174fc4" />
        <path d="M24 10h6q5 0 4 5l-2 8q-1 4-6 4h-9q4-1 5-5l3-8q1-3-1-4z" fill="url(#c2)" />
        <path d="M15 25l4-10q1-4 4-5l-5 15z" fill="#f8ecf0" />
        <rect x="8" y="24" width="27" height="11" rx="2.500" fill="#ffc20e" />
        <text x="12" y="33" fontSize="9.500" fontWeight="800" textLength="20" lengthAdjust="spacing" fill="#222">PRE</text>
      </svg>
    </div>
  );
}

const tabs: [string, number, string][] = [
  ["Add Column", 87, "ml-[21px]"],
  ["View", 35, "ml-[41px]"],
  ["Tools", 36, "ml-[41px]"],
  ["Help", 32, "ml-[41px]"],
];

export default function App() {
  return (
    <div className="relative flex h-[1080px] w-[1920px] flex-col overflow-hidden bg-[#f3f2f1] font-['Open_Sans','Noto_Sans',sans-serif] text-[15.500px]">
      {/* title bar */}
      <div className="flex h-[34px] shrink-0 items-start bg-white">
        <svg width="18" height="24" viewBox="0 0 18 24" className="mt-[4px] ml-[3px] shrink-0">
          {pbiBars}
        </svg>
        <div className="mt-[8px] ml-[9px] h-[20px] w-px bg-[#8a8886]" />
        <svg width="19" height="19" viewBox="0 0 19 19" fill="none" className="mt-[8px] ml-[18px] shrink-0">
          <path d="M0 0h19v19H2.500L0 16.500z" fill="#8a5aa8" />
          <path d="M2 1.500h15v9H2zM5 13.500h8V19H5z" fill="#fff" />
          <path d="M6 14h3v4.500h-1.500v-3H6zM11 13.500h2V19h-2z" fill="#8a5aa8" />
        </svg>
        <svg width="9" height="9" viewBox="0 0 9 9" className="mt-[16px] ml-[13px] shrink-0">
          <path d="M0 0h9v1.300H0zM0 4h9L4.500 8.500z" fill="#222" />
        </svg>
        <div className="mt-[8px] ml-[16px] h-[20px] w-px bg-[#8a8886]" />
        <T w={147} c="mt-[6px] ml-[7px] text-[17px] leading-[24px] text-[#9b9b9b]">
          tripadvisor_project
        </T>
        <div className="mt-[16px] ml-auto h-px w-[15px] bg-[#8a8a8a]" />
        <svg width="15" height="15" viewBox="0 0 15 15" fill="none" stroke="#8a8a8a" className="mt-[9px] ml-[54px] shrink-0">
          <rect x=".6" y="3.500" width="11" height="11" rx="2" />
          <path d="M4 .7h6.500q4 0 4 4V11" />
        </svg>
        <div className="mt-[9px] mr-[29px] ml-[56px]">
          <CrossThin s={15} k="#858585" />
        </div>
      </div>

      {/* tabs */}
      <div className="flex h-[35px] shrink-0 items-end bg-white text-[#323130] shadow-[inset_0_-1px_0_#d8dadc]">
        <div className="flex h-[34px] w-[84px] items-center justify-center self-start bg-[#1979ca] pt-px text-white">
          <T w={24}>File</T>
        </div>
        <div className="flex h-full w-[83px] items-center justify-center pt-px">
          <T w={41}>Home</T>
        </div>
        <div className="flex h-full w-[112px] items-center justify-center border border-b-0 border-[#d8dadc] bg-[#f4f6f8] pr-px">
          <T w={71}>Transform</T>
        </div>
        {tabs.map(([t, w, m]) => (
          <div key={t} className={`flex h-full items-center pt-px ${m}`}>
            <T w={w}>{t}</T>
          </div>
        ))}
        <svg width="16" height="9" viewBox="0 0 16 9" fill="none" className="mb-[14px] ml-auto shrink-0">
          <path d="M.6 8.500L8 1L15.400 8.500" stroke="#999" strokeWidth="1.400" />
        </svg>
        <div className="mr-[5px] mb-[7px] ml-[13px] flex h-[22px] w-[22px] items-center justify-center rounded-full bg-[#0563c1] text-[16px] leading-none font-semibold text-white">
          ?
        </div>
      </div>

      {/* ribbon */}
      <div className="flex h-[138px] shrink-0 border-b border-[#d4dade] bg-[#f4f6f8]">
        <Group w="w-[317px]" label="Table" lw={35}>
          <Big c="ml-[4px] w-[70px]" icon={bGroup} a={["Group", 44]} b={["By", 17]} />
          <Big c="w-[95px]" icon={bHeaders} a={["Use First Row", 95]} b={["as Headers", 75, true]} />
          <div className="ml-[9px]">
            <Row icon={iTranspose} t="Transpose" w={70} />
            <Row icon={iReverse} t="Reverse Rows" w={97} />
            <Row icon={iCount} t="Count Rows" w={84} />
          </div>
        </Group>
        <Group w="w-[555px]" label="Any Column" lw={86}>
          <div className="ml-[9px] w-[215px]">
            <Row t="Data Type: Decimal Number" w={193} caret />
            <Row icon={iDetect} t="Detect Data Type" w={116} />
            <Row icon={iRename} t="Rename" w={57} />
          </div>
          <div className="w-[154px]">
            <Row icon={iReplace} t="Replace Values" w={104} caret />
            <Row icon={iFill} t="Fill" w={20} caret />
            <Row icon={iPivot} t="Pivot Column" w={94} />
          </div>
          <div>
            <Row icon={iUnpivot} t="Unpivot Columns" w={122} caret />
            <Row icon={iMove} t="Move" w={39} caret />
            <Row icon={iList} t="Convert to List" w={101} />
          </div>
        </Group>
        <Group w="w-[298px]" label="Text Column" lw={85}>
          <Big c="ml-[5px] w-[72px]" icon={bSplit} a={["Split", 31]} b={["Column", 54, true]} />
          <Big c="ml-px w-[60px]" icon={bFormat} a={["Format", 50]} />
          <div className="ml-[7px]">
            <Row icon={iMerge} t="Merge Columns" w={111} off />
            <Row icon={iExtract} t="Extract" w={46} caret />
            <Row icon={iParse} t="Parse" w={37} caret off />
          </div>
        </Group>
        <Group w="w-[363px]" label="Number Column" lw={117}>
          <Big c="ml-[4px] w-[68px]" icon={bStats} a={["Statistics", 60]} />
          <Big c="w-[68px]" icon={bStandard} a={["Standard", 62]} />
          <Big c="ml-px w-[68px]" icon={bSci} a={["Scientific", 62]} />
          <div className="ml-[6px]">
            <Row icon={iTrig} t="Trigonometry" w={94} caret />
            <Row icon={iRound} t="Rounding" w={68} caret />
            <Row icon={iInfo} t="Information" w={82} caret />
          </div>
        </Group>
        <Group w="w-[207px]" label="Date & Time Column" lw={146}>
          <Big c="ml-[10px] w-[50px]" icon={bDate} a={["Date", 32]} off />
          <Big c="ml-[12px] w-[50px]" icon={bTime} a={["Time", 34]} off />
          <Big c="ml-[5px] w-[70px]" icon={bDur} a={["Duration", 61]} off />
        </Group>
        <Group w="w-[165px]" label="Scripts" lw={47}>
          <Big c="ml-[7px] w-[56px]" icon={bR} a={["Run R", 42]} b={["script", 39]} />
          <Big c="ml-[6px] w-[84px]" icon={bPy} a={["Run Python", 80]} b={["script", 38]} />
        </Group>
      </div>

      {/* workspace */}
      <div className="flex h-[768px] shrink-0">
        <div className="flex w-[270px] shrink-0 flex-col border-r border-[#d2d0ce]">
          <div className="mt-[14px] flex h-7 items-center justify-between pr-[13px] pl-[23px] text-[19.500px] font-light text-[#4f4d4b]">
            <T w={92}>Queries [1]</T>
            <Chevron d="M11 0L2.500 8.500L11 17" w={11} h={17} sw={3.4} />
          </div>
          <div className="mt-[18px] ml-[6px] flex h-[36px] w-[258px] items-center border-l-[3px] border-[#117865] bg-[#d1cfcd] pl-[9px] text-[17px] text-[#252423]">
            <svg width="22" height="20" viewBox="0 0 22 20" fill="none" className="shrink-0">
              <rect x=".5" y=".5" width="21" height="19" fill="#fff" stroke="#666" />
              <path d="M1 9h20M1 14h20M8 4v15M14.500 4v15" stroke="#999" />
              <rect width="22" height="4" fill={BLUE} />
            </svg>
            <T w={172} c="ml-[12px]">
              tripadvisor_hotels_file
            </T>
          </div>
        </div>
        <div className="flex w-[1251px] shrink-0 flex-col pt-[15px] pl-[6px]">
          <div className="flex h-[42px] gap-[6px]">
            <div className="flex w-[165px] shrink-0 items-center border-2 border-[#d2d0ce] bg-white pl-[19px]">
              <svg width="22" height="20" viewBox="0 0 22 20" fill="none">
                <path d="M1.500 1.500Q12 9 20 18.500M20.500 2Q9 9 3 18.500" stroke="#c8c8c8" strokeWidth="3.200" />
              </svg>
              <svg width="21" height="19" viewBox="0 0 21 19" fill="none" className="ml-[35px]">
                <path d="M1.500 10l6.500 6.500L19.500 1" stroke="#c8c8c8" strokeWidth="3.600" />
              </svg>
              <span className="-mt-[2px] ml-[30px] font-['Liberation_Serif',serif] text-[24px] leading-none text-[#555] italic">fx</span>
            </div>
            <div className="flex w-[1068px] shrink-0 items-center justify-between border-2 border-[#d2d0ce] bg-white pr-[8px] pl-[12px] font-['DejaVu_Sans_Mono',monospace] text-[15.500px] text-black">
              <T w={831} c="pt-[2px]">
                = Table.ReplaceValue(#"Replaced Value",<span className="text-[#098658]">45</span>,
                <span className="text-[#098658]">4.5</span>,Replacer.ReplaceValue,{"{"}
                <span className="text-[#a31515]">"Hotel stars"</span>
                {"})"}
              </T>
              <Chevron d="M1 1L8.500 8.500L16 1" w={17} h={12} sw={3.4} />
            </div>
          </div>
          <DataGrid />
        </div>
        <Settings />
      </div>

      {/* status */}
      <div className="flex h-[35px] shrink-0 items-center border-y-2 border-t-[#d2d0ce] border-b-[#b8b0af] pr-[8px] pl-[7px] text-[15.500px] text-[#484644]">
        <T w={186}>20 COLUMNS, 504 ROWS</T>
        <T w={303} c="ml-[23px]">
          Column profiling based on top 1000 rows
        </T>
        <T w={252} c="ml-auto">
          PREVIEW DOWNLOADED AT 00:03
        </T>
      </div>

      <Taskbar />
      <Dialog />
      <div className="absolute top-[1px] left-[1859px] h-[46px] w-[55px] border-[5px] border-[#ed1c24]" />
    </div>
  );
}
